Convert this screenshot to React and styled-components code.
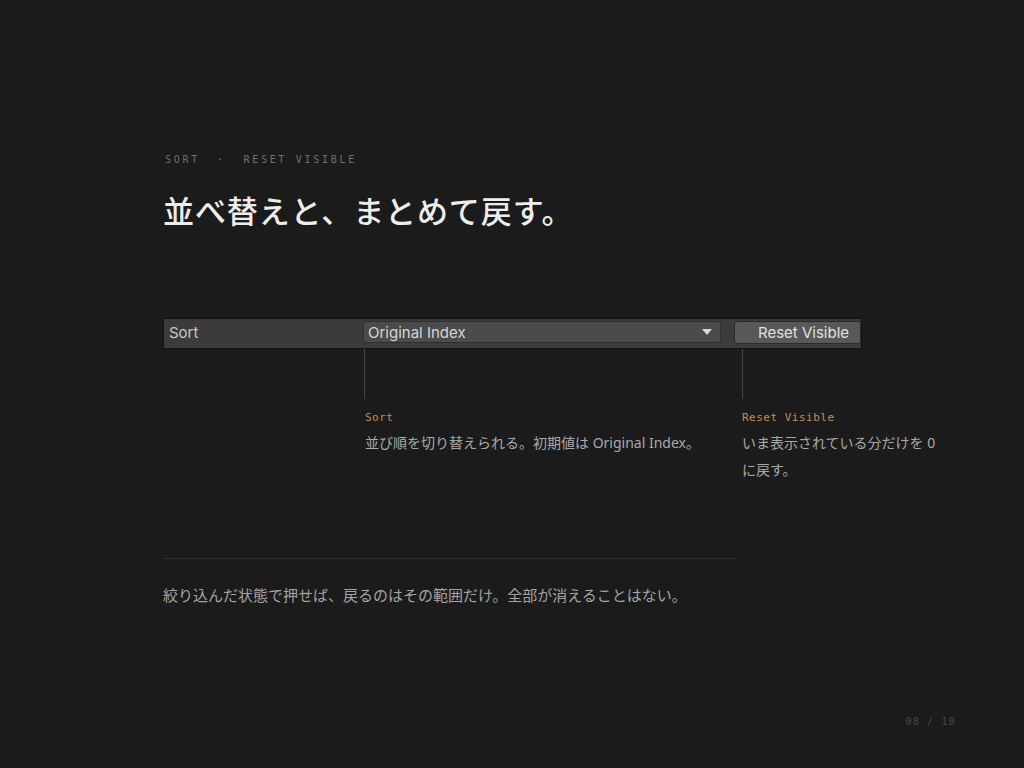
import React from 'react';
import styled, { createGlobalStyle } from 'styled-components';

const GlobalStyle = createGlobalStyle`
  html, body {
    margin: 0;
    padding: 0;
    background: #1b1b1b;
  }
  body {
    font-family: "Noto Sans", "Noto Sans CJK JP", sans-serif;
    color: #ddd;
  }
`;

const Slide = styled.div`
  width: 1024px;
  height: 768px;
  box-sizing: border-box;
  padding: 153px 0 0 163px;
  position: relative;
  overflow: hidden;
`;

const Eyebrow = styled.div`
  padding-left: 2px;
  font-family: "DejaVu Sans Mono", "Liberation Mono", monospace;
  font-size: 10px;
  letter-spacing: 2.7px;
  color: #6f6f6f;
  line-height: 14px;
  white-space: pre;
`;

const Title = styled.h1`
  margin: 21px 0 0 0;
  font-family: "Noto Sans CJK JP", sans-serif;
  font-weight: 500;
  font-size: 31px;
  line-height: 44px;
  color: #ededed;
  letter-spacing: 0.9px;
`;

const Inspector = styled.div`
  margin-top: 86px;
  width: 699px;
  height: 31px;
  box-sizing: border-box;
  padding-top: 2px;
  background: #3b3b3b;
  border: 1px solid #121212;
  display: flex;
  align-items: flex-start;
  font-family: Inter, "Liberation Sans", sans-serif;
  font-size: 15px;
`;

const FieldLabel = styled.div`
  width: 199px;
  height: 23px;
  box-sizing: border-box;
  padding-left: 5px;
  display: flex;
  align-items: center;
  color: #c8c8c8;
`;

const Dropdown = styled.div`
  width: 358px;
  height: 22px;
  margin-right: 13px;
  box-sizing: border-box;
  background: #4b4b4b;
  border: 1px solid #2f2f2f;
  border-radius: 3px;
  display: flex;
  align-items: center;
  justify-content: space-between;
  padding: 0 8px 0 4px;
  color: #d6d6d6;
`;

const Caret = styled.span`
  width: 0;
  height: 0;
  border-left: 5px solid transparent;
  border-right: 5px solid transparent;
  border-top: 6px solid #d8d8d8;
`;

const Button = styled.div`
  width: 127px;
  height: 23px;
  box-sizing: border-box;
  background: #585858;
  border: 1px solid #2a2a2a;
  border-radius: 3px;
  display: flex;
  align-items: center;
  justify-content: center;
  padding-left: 12px;
  color: #e2e2e2;
`;

const Notes = styled.div`
  display: grid;
  grid-template-columns: 201px 378px 200px;
`;

const Note = styled.div`
  display: flex;
  flex-direction: column;
  padding-left: ${(p) => p.$inset || 0}px;
`;

const Leader = styled.div`
  width: 1px;
  height: 50px;
  margin-left: ${(p) => p.$offset || 0}px;
  background: #454545;
`;

const NoteKey = styled.div`
  margin-top: 12px;
  font-family: "DejaVu Sans Mono", "Liberation Mono", monospace;
  font-size: 11px;
  letter-spacing: 0.5px;
  color: #c98d4b;
  line-height: 14px;
`;

const NoteText = styled.div`
  margin-top: 4px;
  font-size: 14px;
  line-height: 27px;
  color: #a9a9a9;
`;

const Divider = styled.hr`
  margin: 75px 0 0 0;
  width: 574px;
  border: none;
  border-top: 1px solid #2e2e2e;
`;

const Footnote = styled.p`
  margin: 24px 0 0 0;
  font-size: 15px;
  line-height: 24px;
  color: #a4a4a4;
`;

const PageNum = styled.div`
  position: absolute;
  right: 68px;
  bottom: 41px;
  font-family: "DejaVu Sans Mono", "Liberation Mono", monospace;
  font-size: 10px;
  letter-spacing: 1.2px;
  color: #474747;
  white-space: pre;
`;

export default function App() {
  return (
    <>
      <GlobalStyle />
      <Slide>
        <Eyebrow>{'SORT  ·  RESET VISIBLE'}</Eyebrow>
        <Title>並べ替えと、まとめて戻す。</Title>
        <Inspector>
          <FieldLabel>Sort</FieldLabel>
          <Dropdown>
            <span>Original Index</span>
            <Caret />
          </Dropdown>
          <Button>Reset Visible</Button>
        </Inspector>
        <Notes>
          <div />
          <Note $inset={1}>
            <Leader $offset={-1} />
            <NoteKey>Sort</NoteKey>
            <NoteText>並び順を切り替えられる。初期値は Original Index。</NoteText>
          </Note>
          <Note>
            <Leader />
            <NoteKey>Reset Visible</NoteKey>
            <NoteText>いま表示されている分だけを 0 に戻す。</NoteText>
          </Note>
        </Notes>
        <Divider />
        <Footnote>絞り込んだ状態で押せば、戻るのはその範囲だけ。全部が消えることはない。</Footnote>
        <PageNum>{'08 / 10'}</PageNum>
      </Slide>
    </>
  );
}
